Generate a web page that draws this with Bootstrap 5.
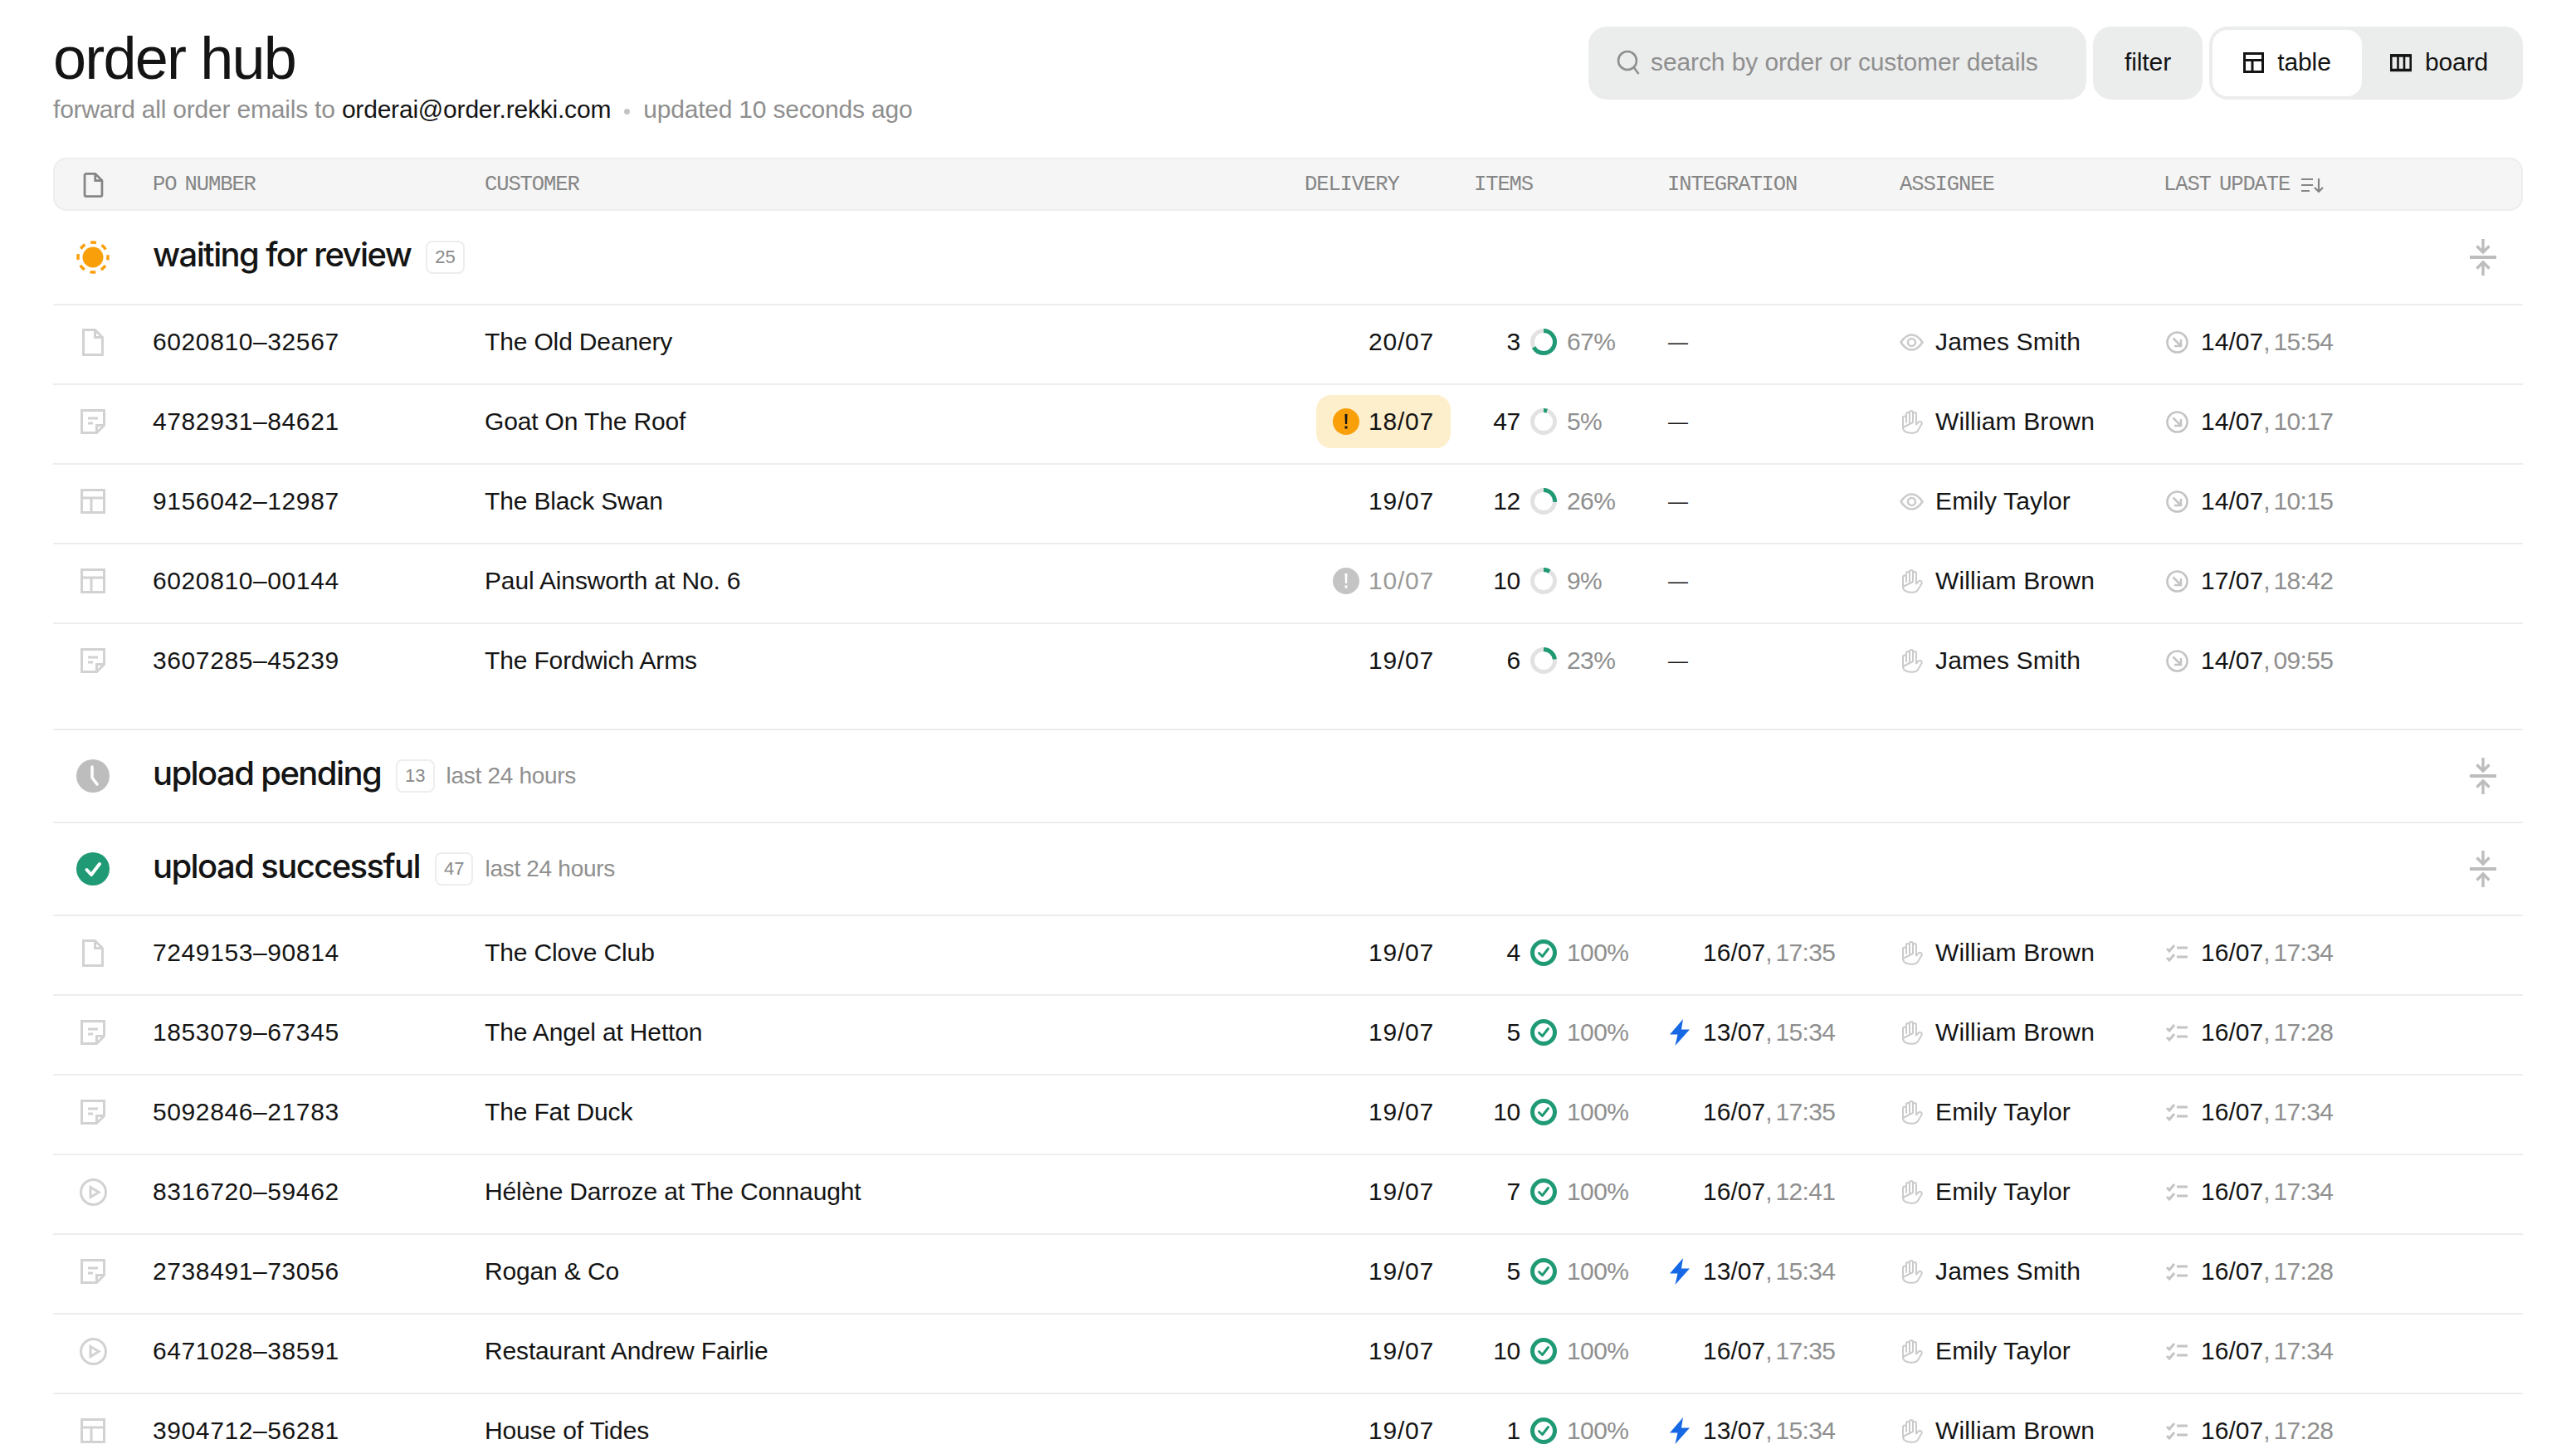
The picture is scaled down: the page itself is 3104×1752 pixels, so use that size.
<!DOCTYPE html>
<html lang="en">
<head>
<meta charset="utf-8">
<title>order hub</title>
<link href="https://cdn.jsdelivr.net/npm/bootstrap@5.3.0/dist/css/bootstrap.min.css" rel="stylesheet">
<style>
html,body{height:100%;overflow:hidden;}
body{font-family:"Liberation Sans",Arial,sans-serif;font-size:30px;line-height:36px;color:#141414;background:#fff;letter-spacing:-.01em;}
.hub-page{padding:32px 64px 0;}
.hub-top{height:158px;}
.hub-title{font-size:72px;line-height:72px;font-weight:400;letter-spacing:-.025em;margin:2px 0 0;}
.hub-sub{font-size:30px;line-height:36px;letter-spacing:-.2px;color:#8f8f8f;margin:8px 0 0;}
.hub-sub b{font-weight:400;color:#141414;}
.hub-dot{display:inline-block;width:7px;height:7px;border-radius:50%;background:#c4c4c4;margin:0 16px;vertical-align:4px;}
.hub-ctl{height:88px;background:#ebecec;border-radius:22px;font-size:30px;letter-spacing:-.1px;padding-bottom:3px;}
.hub-search{width:600px;padding-left:34px;gap:13px;color:#8f8f8f;}
.hub-filter{width:132px;margin-left:8px;margin-right:8px;}
.hub-seg{width:378px;padding:4px;}
.hub-seg-item{height:80px;border-radius:18px;gap:16px;padding-bottom:2px;}
.hub-seg-on{width:180px;background:#fff;}
.hub-seg-off{flex:1;padding-right:4px;}
.ord-grid{display:grid;grid-template-columns:120px 400px 988px 204px 234px 279px 318px 1fr;}
.ord-head{height:64px;background:#f5f5f5;border:2px solid #ededed;border-radius:16px;font-family:"Liberation Mono",monospace;font-size:25.5px;letter-spacing:-1.1px;word-spacing:-4px;color:#858585;align-items:center;grid-template-columns:118px 400px 988px 204px 233px 280px 318px 1fr;padding-top:1px;}
.ord-head-ic{padding-right:26px;}
.ord-sort{gap:14px;}
.ord-group{border-bottom:2px solid #ededed;height:112px;padding-left:28px;padding-right:32px;}
.ord-group-first{height:114px;}
.ord-group h2{font-family:Inter,"Liberation Sans",sans-serif;font-size:40px;line-height:48px;font-weight:500;letter-spacing:-.04em;margin:0 0 6px 52px;color:#141414;}
.ord-count{height:40px;padding:0 9px;border:2px solid #ededed;border-radius:8px;font-size:22px;letter-spacing:0;color:#8a8a8a;margin-left:18px;display:flex;align-items:center;line-height:1;}
.ord-when{font-size:28px;color:#8f8f8f;margin-left:14px;}
.ord-row{height:96px;border-bottom:2px solid #ededed;}
.ord-row>div{display:flex;align-items:center;padding-bottom:6px;}
.ord-row>div:nth-child(2){letter-spacing:.6px;}
.ord-row>div:nth-child(3){letter-spacing:-.15px;}
.ord-row>div:nth-child(4){letter-spacing:.8px;}
.ord-row>div:nth-child(6),.ord-row>div:nth-child(8){letter-spacing:.05px;}
.ord-row>div:nth-child(7){letter-spacing:.15px;}
.ord-last{height:128px;}
.ord-row.ord-last>div{padding-bottom:38px;}
.ord-ic{justify-content:center;color:#d2d2d2;padding-right:24px;}
.ord-del{justify-content:flex-end;padding-right:48px;}
.ord-pill{height:64px;padding:0 20px;margin-right:-20px;border-radius:18px;gap:11px;}
.ord-warn{background:#fdefcb;}
.ord-muted{color:#9a9a9a;}
.ord-num{width:56px;text-align:right;margin-right:12px;}
.ord-pct{color:#8f8f8f;margin-left:12px;letter-spacing:-.6px;}
.ord-int{padding-left:42px;}
.ord-int-bolt{padding-left:2px;gap:16px;}
.ord-dash{font-size:24px;}
.ord-time{color:#8f8f8f;word-spacing:-3px;letter-spacing:-.7px;}
.ord-as-i{width:43px;color:#cbcbcb;flex:none;}
.ord-up-i{width:45px;padding-left:3px;color:#c4c4c4;flex:none;}
.ord-hand{margin-left:2px;}
svg.ic{fill:none;stroke:currentColor;flex:none;display:block;overflow:visible;}
</style>
</head>
<body>
<svg class="d-none" xmlns="http://www.w3.org/2000/svg">
<symbol id="i-doc" viewBox="0 0 26 33"><path stroke-width="3" d="M1.500 1.500h14l9 9v21h-23zM15.500 1.500v9h9"/></symbol>
<symbol id="i-note" viewBox="0 0 30 30"><path stroke-width="3" d="M1.500 1.500h27v18l-9 9h-18zM19.500 28.500v-9h9M9 11h12M9 17h6"/></symbol>
<symbol id="i-table" viewBox="0 0 30 30"><path stroke-width="3" d="M1.500 1.500h27v27h-27zM1.500 11h27M13 11v17"/></symbol>
<symbol id="i-play" viewBox="0 0 33 33"><circle cx="16.500" cy="16.500" r="15" stroke-width="3"/><path stroke-width="3" d="M13 10.500l10 6-10 6z"/></symbol>
<symbol id="i-eye" viewBox="0 0 29 21"><path stroke-width="2.600" d="M1.500 10.500C6 3.500 10 1.500 14.500 1.500S23 3.500 27.500 10.500C23 17.500 19 19.500 14.500 19.500S6 17.500 1.500 10.500z"/><circle cx="14.500" cy="10.500" r="4.500" stroke-width="2.600"/></symbol>
<symbol id="i-hand" viewBox="0 0 26 29"><path stroke-width="2" stroke-linecap="round" stroke-linejoin="round" d="M2 21V9.500a2 2 0 0 1 4 0V15M6 15V5a2 2 0 0 1 4 0v10M10 15V3a2 2 0 0 1 4 0v12M14 15V5a2 2 0 0 1 4 0v12.500l2.800-3c2-2 5 .5 3.500 3L20.500 24c-1.500 2.500-4 3.800-7 3.800C7 27.800 2 26 2 21z"/></symbol>
<symbol id="i-in" viewBox="0 0 27 27"><circle cx="13.500" cy="13.500" r="12" stroke-width="2.600"/><path stroke-width="2.600" d="M8.500 8.500l9 9M18 10v8h-8"/></symbol>
<symbol id="i-list" viewBox="0 0 26 22"><path stroke-width="3" d="M1 6l3 3 6-7M1 17l3 3 6-7M13 5h13M13 16h13"/></symbol>
<symbol id="i-check" viewBox="0 0 32 32"><circle cx="16" cy="16" r="13.500" stroke-width="5" stroke="#1f9a74" /><path stroke="#1f9a74" stroke-width="3" stroke-linecap="round" stroke-linejoin="round" d="M10.500 16.500l4 4 7-9"/></symbol>
<symbol id="i-bolt" viewBox="0 0 24 32"><path fill="#1768e5" stroke="none" d="M16 0L0 18.500h9.500L6.500 32 24 12.500h-10z"/></symbol>
<symbol id="i-warn" viewBox="0 0 32 32"><circle cx="16" cy="16" r="16" fill="#f99f0a" stroke="none"/><path fill="#141414" stroke="none" d="M14.500 7h3l-.4 12h-2.200zM14.500 21.500h3v3h-3z"/></symbol>
<symbol id="i-warn2" viewBox="0 0 32 32"><circle cx="16" cy="16" r="16" fill="#c4c4c4" stroke="none"/><path fill="#fff" stroke="none" d="M14.500 7h3l-.4 12h-2.200zM14.500 21.500h3v3h-3z"/></symbol>
<symbol id="i-fold" viewBox="0 0 32 44"><path stroke-width="3.400" d="M16 0v15M8.500 8.500l7.500 7.500 7.500-7.500M16 44V29M8.500 35.500l7.500-7.500 7.500 7.500"/><path stroke-width="4" d="M0 22h32"/></symbol>
</svg>

<div class="hub-page">
  <header class="hub-top d-flex justify-content-between align-items-start">
    <div>
      <h1 class="hub-title">order hub</h1>
      <p class="hub-sub">forward all order emails to <b>orderai@order.rekki.com</b><span class="hub-dot"></span>updated 10 seconds ago</p>
    </div>
    <div class="d-flex">
      <div class="hub-ctl hub-search d-flex align-items-center">
        <svg class="ic" width="28" height="30" viewBox="0 0 28 30"><circle cx="13" cy="13" r="11" stroke-width="2.600"/><path stroke-width="2.600" d="M20.500 21l6 8"/></svg>
        <span>search by order or customer details</span>
      </div>
      <div class="hub-ctl hub-filter d-flex align-items-center justify-content-center">filter</div>
      <div class="hub-ctl hub-seg d-flex">
        <div class="hub-seg-item hub-seg-on d-flex align-items-center justify-content-center">
          <svg class="ic" width="25" height="25" viewBox="0 0 25 25"><path stroke-width="3" d="M1.500 1.500h22v22h-22zM1.500 9.500h22M11 9.500v14"/></svg><span>table</span>
        </div>
        <div class="hub-seg-item hub-seg-off d-flex align-items-center justify-content-center">
          <svg class="ic" width="26" height="21" viewBox="0 0 26 21"><path stroke-width="2.600" d="M1.300 1.500h23.400v18H1.300zM9.500 1.500v18M17 1.500v18"/><path stroke-width="3.500" d="M0 2h26M0 19.500h26"/></svg><span>board</span>
        </div>
      </div>
    </div>
  </header>

  <div class="ord-grid ord-head">
    <div class="ord-head-ic d-flex justify-content-center"><svg class="ic" width="25" height="30" viewBox="0 0 26 33"><path stroke-width="3" d="M1.500 3.500a2 2 0 0 1 2-2h12l9 9v19a2 2 0 0 1-2 2h-19a2 2 0 0 1-2-2zM15.500 1.500v9h9"/></svg></div>
    <div>PO NUMBER</div><div>CUSTOMER</div><div>DELIVERY</div><div>ITEMS</div><div>INTEGRATION</div><div>ASSIGNEE</div>
    <div class="ord-sort d-flex align-items-center">LAST UPDATE<svg class="ic" width="28" height="18" viewBox="0 0 28 18"><path stroke-width="2.200" d="M0 2h14M0 9h14M0 16h10M21 1v15.500M16 12l5 5 5-5"/></svg></div>
  </div>

  <section>
    <div class="ord-group ord-group-first d-flex align-items-center">
      <svg class="ic" width="40" height="40" viewBox="0 0 40 40" style="color:#f99f0a"><circle cx="20" cy="20" r="12.500" fill="#f99f0a" stroke="none"/><circle cx="20" cy="20" r="18" stroke-width="3.500" stroke-dasharray="7 7.140" stroke-dashoffset="3.500"/></svg>
      <h2>waiting for review</h2><span class="ord-count">25</span>
      <svg class="ic ms-auto" width="32" height="44" style="color:#bdbdbd"><use href="#i-fold"/></svg>
    </div>

    <div class="ord-grid ord-row">
      <div class="ord-ic"><svg class="ic" width="26" height="33"><use href="#i-doc"/></svg></div><div>6020810–32567</div><div>The Old Deanery</div>
      <div class="ord-del">20/07</div>
      <div><span class="ord-num">3</span><svg class="ic" width="32" height="32" viewBox="0 0 32 32"><circle cx="16" cy="16" r="13.500" stroke="#e2e2e2" stroke-width="5"/><circle cx="16" cy="16" r="13.500" stroke="#1f9a74" stroke-width="5" pathLength="100" stroke-dasharray="67 100" transform="rotate(-90 16 16)"/></svg><span class="ord-pct">67%</span></div>
      <div><span class="ord-dash">—</span></div>
      <div><span class="ord-as-i"><svg class="ic" width="29" height="21"><use href="#i-eye"/></svg></span>James Smith</div>
      <div><span class="ord-up-i"><svg class="ic" width="27" height="27"><use href="#i-in"/></svg></span><span>14/07<span class="ord-time">, 15:54</span></span></div>
    </div>
    <div class="ord-grid ord-row">
      <div class="ord-ic"><svg class="ic" width="30" height="30"><use href="#i-note"/></svg></div><div>4782931–84621</div><div>Goat On The Roof</div>
      <div class="ord-del"><span class="ord-pill ord-warn d-flex align-items-center"><svg class="ic" width="32" height="32"><use href="#i-warn"/></svg>18/07</span></div>
      <div><span class="ord-num">47</span><svg class="ic" width="32" height="32" viewBox="0 0 32 32"><circle cx="16" cy="16" r="13.500" stroke="#e2e2e2" stroke-width="5"/><circle cx="16" cy="16" r="13.500" stroke="#1f9a74" stroke-width="5" pathLength="100" stroke-dasharray="5 100" transform="rotate(-90 16 16)"/></svg><span class="ord-pct">5%</span></div>
      <div><span class="ord-dash">—</span></div>
      <div><span class="ord-as-i"><svg class="ic ord-hand" width="26" height="29"><use href="#i-hand"/></svg></span>William Brown</div>
      <div><span class="ord-up-i"><svg class="ic" width="27" height="27"><use href="#i-in"/></svg></span><span>14/07<span class="ord-time">, 10:17</span></span></div>
    </div>
    <div class="ord-grid ord-row">
      <div class="ord-ic"><svg class="ic" width="30" height="30"><use href="#i-table"/></svg></div><div>9156042–12987</div><div>The Black Swan</div>
      <div class="ord-del">19/07</div>
      <div><span class="ord-num">12</span><svg class="ic" width="32" height="32" viewBox="0 0 32 32"><circle cx="16" cy="16" r="13.500" stroke="#e2e2e2" stroke-width="5"/><circle cx="16" cy="16" r="13.500" stroke="#1f9a74" stroke-width="5" pathLength="100" stroke-dasharray="26 100" transform="rotate(-90 16 16)"/></svg><span class="ord-pct">26%</span></div>
      <div><span class="ord-dash">—</span></div>
      <div><span class="ord-as-i"><svg class="ic" width="29" height="21"><use href="#i-eye"/></svg></span>Emily Taylor</div>
      <div><span class="ord-up-i"><svg class="ic" width="27" height="27"><use href="#i-in"/></svg></span><span>14/07<span class="ord-time">, 10:15</span></span></div>
    </div>
    <div class="ord-grid ord-row">
      <div class="ord-ic"><svg class="ic" width="30" height="30"><use href="#i-table"/></svg></div><div>6020810–00144</div><div>Paul Ainsworth at No. 6</div>
      <div class="ord-del"><span class="ord-pill ord-muted d-flex align-items-center"><svg class="ic" width="32" height="32"><use href="#i-warn2"/></svg>10/07</span></div>
      <div><span class="ord-num">10</span><svg class="ic" width="32" height="32" viewBox="0 0 32 32"><circle cx="16" cy="16" r="13.500" stroke="#e2e2e2" stroke-width="5"/><circle cx="16" cy="16" r="13.500" stroke="#1f9a74" stroke-width="5" pathLength="100" stroke-dasharray="9 100" transform="rotate(-90 16 16)"/></svg><span class="ord-pct">9%</span></div>
      <div><span class="ord-dash">—</span></div>
      <div><span class="ord-as-i"><svg class="ic ord-hand" width="26" height="29"><use href="#i-hand"/></svg></span>William Brown</div>
      <div><span class="ord-up-i"><svg class="ic" width="27" height="27"><use href="#i-in"/></svg></span><span>17/07<span class="ord-time">, 18:42</span></span></div>
    </div>
    <div class="ord-grid ord-row ord-last">
      <div class="ord-ic"><svg class="ic" width="30" height="30"><use href="#i-note"/></svg></div><div>3607285–45239</div><div>The Fordwich Arms</div>
      <div class="ord-del">19/07</div>
      <div><span class="ord-num">6</span><svg class="ic" width="32" height="32" viewBox="0 0 32 32"><circle cx="16" cy="16" r="13.500" stroke="#e2e2e2" stroke-width="5"/><circle cx="16" cy="16" r="13.500" stroke="#1f9a74" stroke-width="5" pathLength="100" stroke-dasharray="23 100" transform="rotate(-90 16 16)"/></svg><span class="ord-pct">23%</span></div>
      <div><span class="ord-dash">—</span></div>
      <div><span class="ord-as-i"><svg class="ic ord-hand" width="26" height="29"><use href="#i-hand"/></svg></span>James Smith</div>
      <div><span class="ord-up-i"><svg class="ic" width="27" height="27"><use href="#i-in"/></svg></span><span>14/07<span class="ord-time">, 09:55</span></span></div>
    </div>
  </section>

  <section class="ord-group d-flex align-items-center">
    <svg class="ic" width="40" height="40" viewBox="0 0 40 40"><circle cx="20" cy="20" r="20" fill="#bdbdbd" stroke="none"/><path stroke="#fff" stroke-width="3.500" stroke-linecap="round" d="M19 9v13l6 8"/></svg>
    <h2>upload pending</h2><span class="ord-count">13</span><span class="ord-when">last 24 hours</span>
    <svg class="ic ms-auto" width="32" height="44" style="color:#bdbdbd"><use href="#i-fold"/></svg>
  </section>

  <section>
    <div class="ord-group d-flex align-items-center">
      <svg class="ic" width="40" height="40" viewBox="0 0 40 40"><circle cx="20" cy="20" r="20" fill="#1f9a74" stroke="none"/><path stroke="#fff" stroke-width="4" stroke-linecap="round" stroke-linejoin="round" d="M12.500 21l5.500 6 10-13"/></svg>
      <h2>upload successful</h2><span class="ord-count">47</span><span class="ord-when">last 24 hours</span>
      <svg class="ic ms-auto" width="32" height="44" style="color:#bdbdbd"><use href="#i-fold"/></svg>
    </div>

    <div class="ord-grid ord-row">
      <div class="ord-ic"><svg class="ic" width="26" height="33"><use href="#i-doc"/></svg></div><div>7249153–90814</div><div>The Clove Club</div>
      <div class="ord-del">19/07</div>
      <div><span class="ord-num">4</span><svg class="ic" width="32" height="32"><use href="#i-check"/></svg><span class="ord-pct">100%</span></div>
      <div class="ord-int"><span>16/07<span class="ord-time">, 17:35</span></span></div>
      <div><span class="ord-as-i"><svg class="ic ord-hand" width="26" height="29"><use href="#i-hand"/></svg></span>William Brown</div>
      <div><span class="ord-up-i"><svg class="ic" width="26" height="22"><use href="#i-list"/></svg></span><span>16/07<span class="ord-time">, 17:34</span></span></div>
    </div>
    <div class="ord-grid ord-row">
      <div class="ord-ic"><svg class="ic" width="30" height="30"><use href="#i-note"/></svg></div><div>1853079–67345</div><div>The Angel at Hetton</div>
      <div class="ord-del">19/07</div>
      <div><span class="ord-num">5</span><svg class="ic" width="32" height="32"><use href="#i-check"/></svg><span class="ord-pct">100%</span></div>
      <div class="ord-int-bolt"><svg class="ic" width="24" height="32"><use href="#i-bolt"/></svg><span>13/07<span class="ord-time">, 15:34</span></span></div>
      <div><span class="ord-as-i"><svg class="ic ord-hand" width="26" height="29"><use href="#i-hand"/></svg></span>William Brown</div>
      <div><span class="ord-up-i"><svg class="ic" width="26" height="22"><use href="#i-list"/></svg></span><span>16/07<span class="ord-time">, 17:28</span></span></div>
    </div>
    <div class="ord-grid ord-row">
      <div class="ord-ic"><svg class="ic" width="30" height="30"><use href="#i-note"/></svg></div><div>5092846–21783</div><div>The Fat Duck</div>
      <div class="ord-del">19/07</div>
      <div><span class="ord-num">10</span><svg class="ic" width="32" height="32"><use href="#i-check"/></svg><span class="ord-pct">100%</span></div>
      <div class="ord-int"><span>16/07<span class="ord-time">, 17:35</span></span></div>
      <div><span class="ord-as-i"><svg class="ic ord-hand" width="26" height="29"><use href="#i-hand"/></svg></span>Emily Taylor</div>
      <div><span class="ord-up-i"><svg class="ic" width="26" height="22"><use href="#i-list"/></svg></span><span>16/07<span class="ord-time">, 17:34</span></span></div>
    </div>
    <div class="ord-grid ord-row">
      <div class="ord-ic"><svg class="ic" width="33" height="33"><use href="#i-play"/></svg></div><div>8316720–59462</div><div>Hélène Darroze at The Connaught</div>
      <div class="ord-del">19/07</div>
      <div><span class="ord-num">7</span><svg class="ic" width="32" height="32"><use href="#i-check"/></svg><span class="ord-pct">100%</span></div>
      <div class="ord-int"><span>16/07<span class="ord-time">, 12:41</span></span></div>
      <div><span class="ord-as-i"><svg class="ic ord-hand" width="26" height="29"><use href="#i-hand"/></svg></span>Emily Taylor</div>
      <div><span class="ord-up-i"><svg class="ic" width="26" height="22"><use href="#i-list"/></svg></span><span>16/07<span class="ord-time">, 17:34</span></span></div>
    </div>
    <div class="ord-grid ord-row">
      <div class="ord-ic"><svg class="ic" width="30" height="30"><use href="#i-note"/></svg></div><div>2738491–73056</div><div>Rogan &amp; Co</div>
      <div class="ord-del">19/07</div>
      <div><span class="ord-num">5</span><svg class="ic" width="32" height="32"><use href="#i-check"/></svg><span class="ord-pct">100%</span></div>
      <div class="ord-int-bolt"><svg class="ic" width="24" height="32"><use href="#i-bolt"/></svg><span>13/07<span class="ord-time">, 15:34</span></span></div>
      <div><span class="ord-as-i"><svg class="ic ord-hand" width="26" height="29"><use href="#i-hand"/></svg></span>James Smith</div>
      <div><span class="ord-up-i"><svg class="ic" width="26" height="22"><use href="#i-list"/></svg></span><span>16/07<span class="ord-time">, 17:28</span></span></div>
    </div>
    <div class="ord-grid ord-row">
      <div class="ord-ic"><svg class="ic" width="33" height="33"><use href="#i-play"/></svg></div><div>6471028–38591</div><div>Restaurant Andrew Fairlie</div>
      <div class="ord-del">19/07</div>
      <div><span class="ord-num">10</span><svg class="ic" width="32" height="32"><use href="#i-check"/></svg><span class="ord-pct">100%</span></div>
      <div class="ord-int"><span>16/07<span class="ord-time">, 17:35</span></span></div>
      <div><span class="ord-as-i"><svg class="ic ord-hand" width="26" height="29"><use href="#i-hand"/></svg></span>Emily Taylor</div>
      <div><span class="ord-up-i"><svg class="ic" width="26" height="22"><use href="#i-list"/></svg></span><span>16/07<span class="ord-time">, 17:34</span></span></div>
    </div>
    <div class="ord-grid ord-row">
      <div class="ord-ic"><svg class="ic" width="30" height="30"><use href="#i-table"/></svg></div><div>3904712–56281</div><div>House of Tides</div>
      <div class="ord-del">19/07</div>
      <div><span class="ord-num">1</span><svg class="ic" width="32" height="32"><use href="#i-check"/></svg><span class="ord-pct">100%</span></div>
      <div class="ord-int-bolt"><svg class="ic" width="24" height="32"><use href="#i-bolt"/></svg><span>13/07<span class="ord-time">, 15:34</span></span></div>
      <div><span class="ord-as-i"><svg class="ic ord-hand" width="26" height="29"><use href="#i-hand"/></svg></span>William Brown</div>
      <div><span class="ord-up-i"><svg class="ic" width="26" height="22"><use href="#i-list"/></svg></span><span>16/07<span class="ord-time">, 17:28</span></span></div>
    </div>
  </section>
</div>
<script src="https://cdn.jsdelivr.net/npm/bootstrap@5.3.0/dist/js/bootstrap.bundle.min.js"></script>
</body>
</html>
